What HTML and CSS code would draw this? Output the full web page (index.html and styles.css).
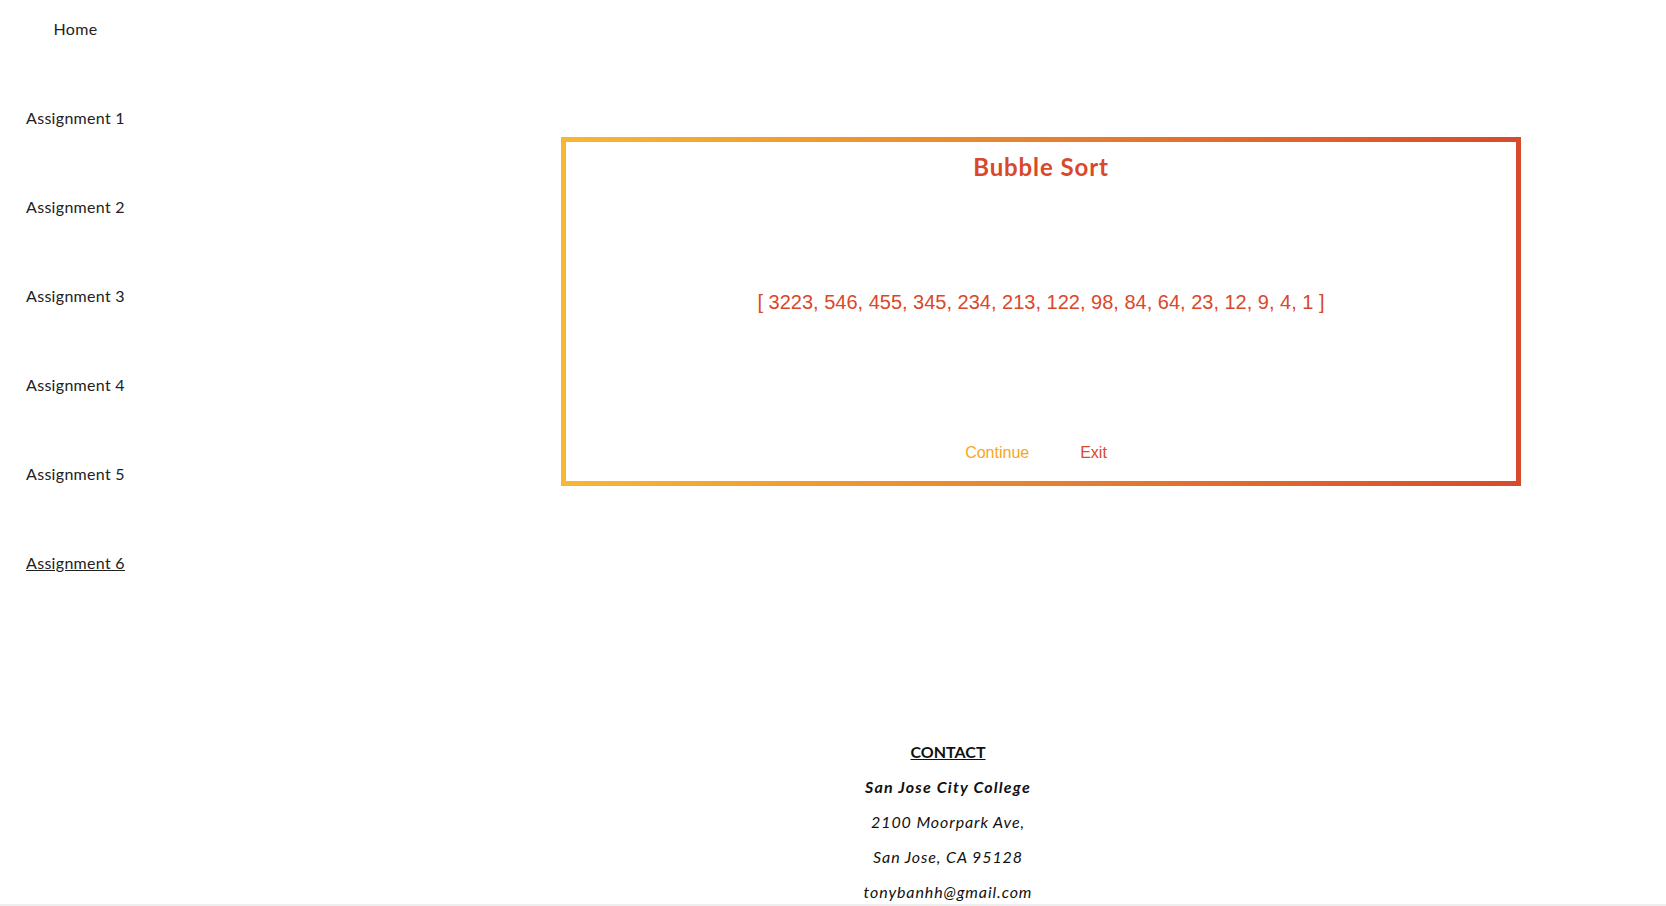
FILE: index.html
```html
<!DOCTYPE html>
<html lang="en">
<head>
<meta charset="utf-8">
<title>Bubble Sort</title>
<link rel="stylesheet" href="styles.css">
</head>
<body>
<div class="page">
  <nav class="sidebar">
    <ul class="nav-list">
      <li><a class="nav-link" href="#">Home</a></li>
      <li><a class="nav-link" href="#">Assignment 1</a></li>
      <li><a class="nav-link" href="#">Assignment 2</a></li>
      <li><a class="nav-link" href="#">Assignment 3</a></li>
      <li><a class="nav-link" href="#">Assignment 4</a></li>
      <li><a class="nav-link" href="#">Assignment 5</a></li>
      <li><a class="nav-link active" href="#">Assignment 6</a></li>
    </ul>
  </nav>
  <main class="main">
    <section class="sort-box">
      <h2 class="sort-title">Bubble Sort</h2>
      <p class="sort-array">[ 3223, 546, 455, 345, 234, 213, 122, 98, 84, 64, 23, 12, 9, 4, 1 ]</p>
      <div class="actions">
        <button class="btn btn-continue" type="button">Continue</button>
        <button class="btn btn-exit" type="button">Exit</button>
      </div>
    </section>
    <footer class="footer">
      <p class="contact-head">CONTACT</p>
      <p class="college">San Jose City College</p>
      <p class="addr">2100 Moorpark Ave,</p>
      <p class="addr">San Jose, CA 95128</p>
      <p class="addr">tonybanhh@gmail.com</p>
    </footer>
  </main>
</div>
<div class="bottom-strip"></div>
</body>
</html>
```

FILE: styles.css
```css
html, body {
  margin: 0;
  padding: 0;
  background: #ffffff;
}

body {
  font-family: "Lato", "Open Sans", sans-serif;
  color: #222222;
  overflow: hidden;
  height: 906px;
  display: flex;
  flex-direction: column;
}

.page {
  display: flex;
  flex: 1;
  min-height: 0;
}

.sidebar {
  width: 230px;
  flex-shrink: 0;
}

.nav-list {
  list-style: none;
  margin: 0;
  padding: 20px 0 0 0;
  width: 151px;
  display: flex;
  flex-direction: column;
  gap: 71px;
  text-align: center;
}

.nav-list li {
  line-height: 18px;
}

.nav-link {
  font-size: 16px;
  color: #222222;
  text-decoration: none;
  letter-spacing: 0.3px;
}

.nav-link.active {
  text-decoration: underline;
}

.main {
  flex: 1;
  padding-top: 137px;
}

.sort-box {
  box-sizing: border-box;
  width: 960px;
  height: 349px;
  margin-left: 331px;
  border: 5px solid transparent;
  border-image: linear-gradient(to right, #f8b733, #d74b2a) 1;
  display: flex;
  flex-direction: column;
  align-items: center;
  padding-top: 10px;
}

.sort-title {
  margin: 0;
  font-family: "Lato", sans-serif;
  font-weight: 700;
  font-size: 24px;
  line-height: 30px;
  color: #d9482b;
  letter-spacing: 0.9px;
}

.sort-array {
  margin: 109px 0 0 0;
  font-family: "Liberation Sans", Arial, sans-serif;
  font-size: 20px;
  line-height: 23px;
  color: #d9482b;
}

.actions {
  margin-top: 130px;
  display: flex;
  gap: 51px;
  padding-right: 10px;
}

.btn {
  background: none;
  border: none;
  padding: 0;
  font-family: "Liberation Sans", Arial, sans-serif;
  font-size: 16px;
  line-height: 18px;
  cursor: pointer;
}

.btn-continue {
  color: #f5a623;
}

.btn-exit {
  color: #d9482b;
}

.footer {
  margin-top: 256px;
  text-align: center;
  color: #111111;
  font-size: 16px;
}

.footer p {
  margin: 15px 0;
  line-height: 20px;
}

.contact-head {
  font-weight: 700;
  text-decoration: underline;
}

.college {
  font-weight: 700;
  font-style: italic;
  letter-spacing: 1.2px;
}

.addr {
  font-style: italic;
  letter-spacing: 0.9px;
}

.bottom-strip {
  height: 2px;
  background: #eeeeee;
  flex-shrink: 0;
}
```
